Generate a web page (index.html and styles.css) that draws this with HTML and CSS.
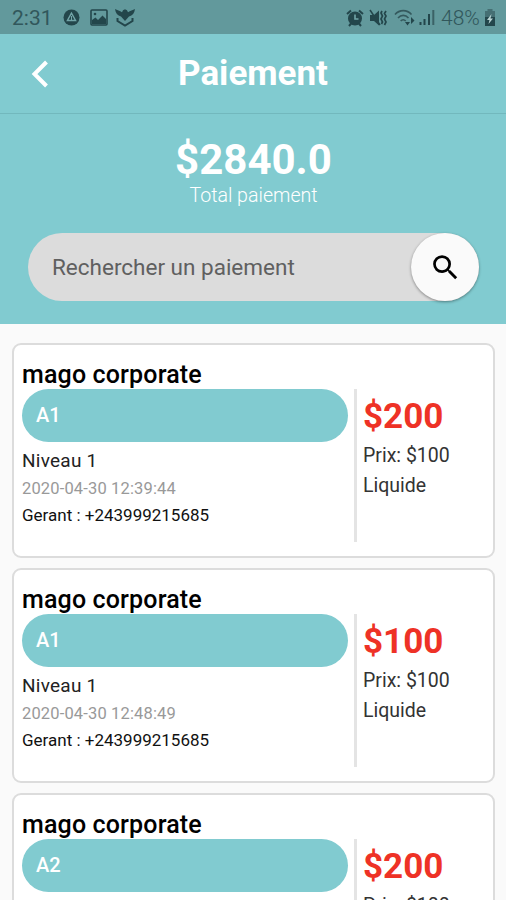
FILE: index.html
```
<!DOCTYPE html>
<html lang="fr">
<head>
    <meta charset="UTF-8">
    <meta name="viewport" content="width=device-width, initial-scale=1.0">
    <title>Paiement</title>
    <link rel="stylesheet" href="styles.css">
</head>
<body>
    <div class="status-bar">
        <span class="clock">2:31</span>
        <svg class="icon-round" width="17" height="17" viewBox="0 0 17 17">
            <circle cx="8.5" cy="8.5" r="8" fill="#23464b"/>
            <path d="M8.5 4.2 4.4 11.5h8.2z" fill="none" stroke="#72a5a8" stroke-width="1.4"/>
            <path d="M8.5 7v4" stroke="#72a5a8"/>
        </svg>
        <svg class="icon-image" width="18" height="17" viewBox="0 0 18 17">
            <rect x="1" y="1" width="16" height="15" rx="1" fill="none" stroke="#23464b" stroke-width="1.6"/>
            <path d="M2 13V11l3.5-2.5L8 11l4.5-4.5L16 10v5H2z" fill="#23464b"/>
            <circle cx="5" cy="5" r="1.3" fill="#23464b"/>
        </svg>
        <svg class="icon-bird" width="20" height="19" viewBox="0 0 20 19">
            <path d="M0 1c2 1 5 2 7 3.2l1-2 2-1 2 1 1 2c2-1.200 5-2.200 7-3.200-.5 4-2.500 6.500-6 7.500L10 13 6 8.500C2.500 7.500.5 5 0 1z" fill="#23464b"/>
            <path d="M2.500 10v3l7.500 4.500 7.500-4.500v-3" fill="none" stroke="#23464b" stroke-width="2"/>
        </svg>
        <div class="status-right">
            <svg width="18" height="18" viewBox="0 0 18 18">
                <circle cx="9" cy="9.5" r="7" fill="#23464b"/>
                <path d="M1 5l4-3.500M17 5l-4-3.500M3 17l2.500-3M15 17l-2.500-3" stroke="#23464b" stroke-width="2"/>
                <path d="M9 5.500V10h3.500" fill="none" stroke="#72a5a8" stroke-width="1.6"/>
            </svg>
            <svg class="icon-mute" width="19" height="18" viewBox="0 0 19 18">
                <path d="M1 6h4l5-4.500v15L5 12H1z" fill="#23464b"/>
                <path d="M1 1l10 15" stroke="#23464b" stroke-width="1.5"/>
                <path d="M13 2l-1 2 1.500 3-1.500 3 1.500 3-1 2M17 2l-1.500 2.500 1.500 2.500-1.500 3 1.500 3-1.500 3" fill="none" stroke="#23464b" stroke-width="1.7"/>
            </svg>
            <svg class="icon-wifi" width="21" height="17" viewBox="0 0 21 17">
                <path d="M1 5.500C5.500.3 13 .3 17.500 5.500M4 9c3-3.500 7.500-3.500 10.500 0M6.700 12c1.500-1.700 3.500-1.700 5 0" fill="none" stroke="#34595d" stroke-width="1.6"/>
                <path d="M11 13h5l-2.500 3.500zM17 8l3.500 3.500L17 15z" fill="#23464b"/>
            </svg>
            <svg class="icon-signal" width="16" height="17" viewBox="0 0 16 17">
                <path d="M1.500 13v3M5.500 10v6M10 5v11" stroke="#23464b" stroke-width="2"/>
                <path d="M14.300 1v15" stroke="#3b6266" stroke-width="2"/>
            </svg>
            <span class="battery-level">48%</span>
            <svg class="icon-battery" width="12" height="17" viewBox="0 0 12 17">
                <path d="M3.500 0h5v2H11v6H1V2h2.500z" fill="#456f73"/>
                <path d="M1 8h10v9H1z" fill="#23464b"/>
                <path d="M7.500 5 3 11h2.500L4.500 15 9 9.500H6.500z" fill="#b8d2d2"/>
            </svg>
        </div>
    </div>

    <header>
        <div class="app-bar">
            <svg class="back" width="18" height="28" viewBox="0 0 18 28">
                <path d="M16.500 2 4.500 14l12 12" fill="none" stroke="#fff" stroke-width="4"/>
            </svg>
            <h1>Paiement</h1>
        </div>
        <div class="summary">
            <div class="total">$2840.0</div>
            <div class="total-label">Total paiement</div>
            <div class="search">
                <span class="placeholder">Rechercher un paiement</span>
                <button class="search-button">
                    <svg width="33" height="33" viewBox="0 0 24 24">
                        <path fill="#000" d="M15.500 14h-.79l-.28-.27A6.471 6.471 0 0 0 16 9.500 6.500 6.500 0 1 0 9.500 16c1.610 0 3.090-.59 4.230-1.570l.27.28v.79l5 4.990L20.490 19l-4.990-5zm-6 0C7.010 14 5 11.990 5 9.500S7.010 5 9.500 5 14 7.010 14 9.500 11.990 14 9.500 14z"/>
                    </svg>
                </button>
            </div>
        </div>
    </header>

    <main>
        <div class="card">
            <h2>mago corporate</h2>
            <div class="card-body">
                <div class="details">
                    <div class="pill">A1</div>
                    <div class="level">Niveau 1</div>
                    <div class="date">2020-04-30 12:39:44</div>
                    <div class="manager">Gerant : +243999215685</div>
                </div>
                <div class="price">
                    <div class="amount">$200</div>
                    <div class="unit">Prix: $100</div>
                    <div class="method">Liquide</div>
                </div>
            </div>
        </div>
        <div class="card">
            <h2>mago corporate</h2>
            <div class="card-body">
                <div class="details">
                    <div class="pill">A1</div>
                    <div class="level">Niveau 1</div>
                    <div class="date">2020-04-30 12:48:49</div>
                    <div class="manager">Gerant : +243999215685</div>
                </div>
                <div class="price">
                    <div class="amount">$100</div>
                    <div class="unit">Prix: $100</div>
                    <div class="method">Liquide</div>
                </div>
            </div>
        </div>
        <div class="card">
            <h2>mago corporate</h2>
            <div class="card-body">
                <div class="details">
                    <div class="pill">A2</div>
                </div>
                <div class="price">
                    <div class="amount">$200</div>
                    <div class="unit">Prix: $100</div>
                </div>
            </div>
        </div>
    </main>
</body>
</html>
```
FILE: styles.css
```
* {
    box-sizing: border-box;
}
body {
    margin: 0;
    height: 900px;
    overflow: hidden;
    font-family: Roboto, "Liberation Sans", sans-serif;
    background: #fafafa;
    color: #000;
}
.status-bar {
    display: flex;
    align-items: center;
    height: 34px;
    padding: 1px 10px 0 12px;
    background: #62999c;
    color: #31575b;
}
.clock {
    width: 51px;
    font-size: 21px;
}
.icon-image {
    margin-left: 10px;
}
.icon-bird {
    margin-left: 7px;
}
.status-right {
    display: flex;
    align-items: center;
    margin-left: auto;
}
.icon-mute {
    margin-left: 5px;
}
.icon-wifi {
    margin-left: 6px;
}
.icon-signal {
    margin-left: 4px;
}
.battery-level {
    width: 43px;
    margin-left: 6px;
    font-size: 21px;
    font-weight: 300;
    white-space: nowrap;
}
header {
    height: 290px;
    background: #81cbd0;
    color: #fff;
}
.app-bar {
    display: flex;
    align-items: center;
    height: 80px;
    padding-left: 30px;
    border-bottom: 1px solid #72b8bd;
}
.app-bar h1 {
    flex: 1;
    margin: 1px 48px 0 0;
    text-align: center;
    font-size: 35px;
    font-weight: 700;
    line-height: 40px;
}
.summary {
    padding: 22px 27px 0 28px;
    text-align: center;
}
.total {
    font-size: 42px;
    font-weight: 700;
    line-height: 48px;
}
.total-label {
    font-size: 19.6px;
    font-weight: 300;
    line-height: 23px;
}
.search {
    display: flex;
    align-items: center;
    justify-content: space-between;
    height: 68px;
    margin-top: 26px;
    padding-left: 24px;
    border-radius: 34px;
    background: #dcdcdc;
    color: #606060;
}
.placeholder {
    font-size: 22.5px;
}
.search-button {
    display: flex;
    align-items: center;
    justify-content: center;
    width: 68px;
    height: 68px;
    padding: 0;
    border: none;
    border-radius: 50%;
    background: #fafafa;
    box-shadow: 0 1px 3px rgba(0, 0, 0, 0.4);
}
main {
    display: flex;
    flex-direction: column;
    gap: 10px;
    padding: 19px 11px 0 12px;
}
.card {
    flex: none;
    height: 215px;
    padding: 15px 7px 0 8px;
    border: 2px solid #dcdcdc;
    border-radius: 9px;
    background: #fff;
}
.card h2 {
    margin: 0;
    font-size: 25px;
    font-weight: 500;
    line-height: 29px;
    letter-spacing: 0.15px;
}
.card-body {
    display: flex;
    height: 153px;
}
.details {
    width: 326px;
    margin-right: 6px;
}
.pill {
    height: 53px;
    padding-left: 14px;
    border-radius: 27px;
    background: #81cbd0;
    color: #fff;
    font-size: 20px;
    font-weight: 500;
    line-height: 53px;
}
.level {
    margin-top: 4px;
    font-size: 19px;
    line-height: 29px;
    letter-spacing: 0.25px;
    color: #222;
}
.date {
    font-size: 16.5px;
    line-height: 27px;
    letter-spacing: 0.15px;
    color: #999;
}
.manager {
    font-size: 17px;
    line-height: 26px;
    color: #111;
}
.price {
    padding: 7px 0 0 6px;
    border-left: 3px solid #e4e4e4;
}
.amount {
    color: #ee3226;
    font-size: 35px;
    font-weight: 700;
    line-height: 41px;
}
.unit,
.method {
    font-size: 19.5px;
    line-height: 30px;
    color: #333;
}
.unit {
    margin-top: 4px;
}
```
